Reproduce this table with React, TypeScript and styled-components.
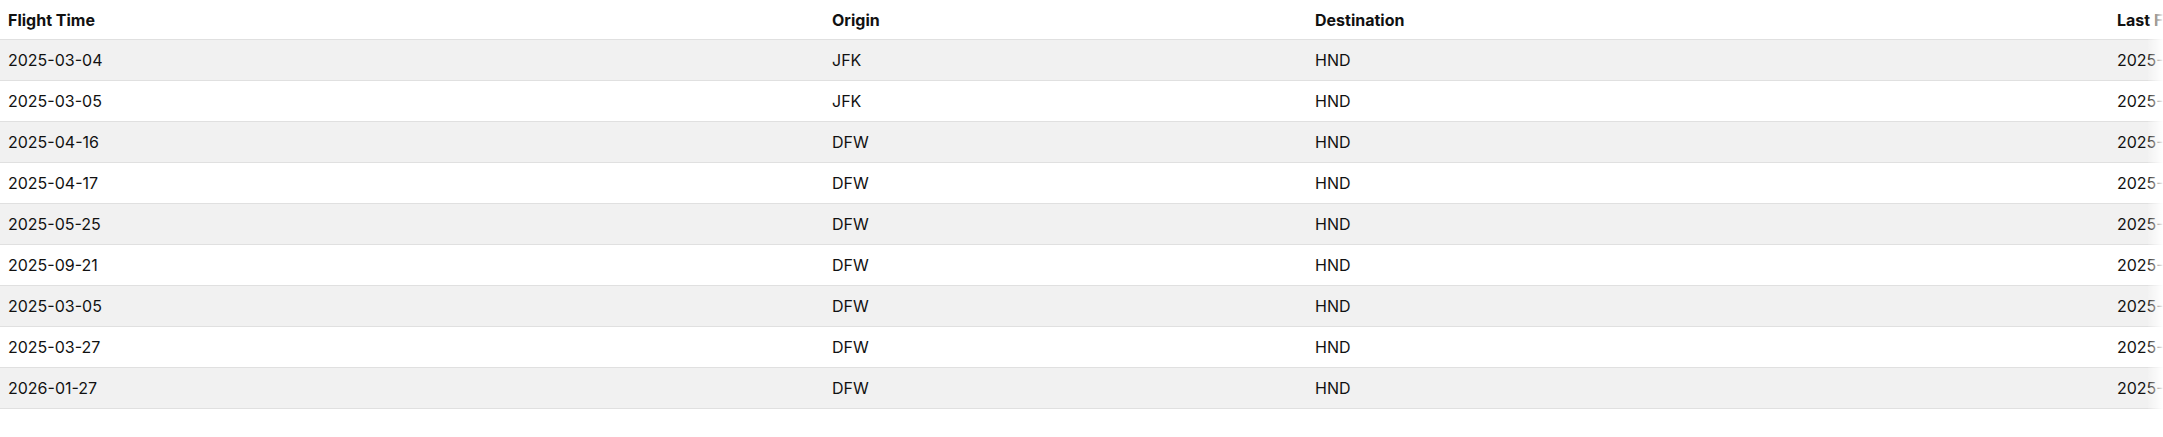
import React from 'react';
import { createGlobalStyle, styled } from 'styled-components';

const GlobalStyle = createGlobalStyle`
    html, body {
        margin: 0;
        padding: 0;
        background: #ffffff;
    }
    body {
        font-family: Inter, 'Liberation Sans', Arial, sans-serif;
        color: #111111;
    }
`;

const Wrapper = styled.div`
    position: relative;
    width: 100%;
    overflow: hidden;
`;

// soft edge where the table scrolls past the window
const Fade = styled.div`
    position: absolute;
    top: 0;
    right: 0;
    bottom: 0;
    width: 15px;
    pointer-events: none;
    background: linear-gradient(to right, rgba(255, 255, 255, 0.1), rgba(255, 255, 255, 0.97));
`;

const Table = styled.table`
    border-collapse: collapse;
    table-layout: fixed;
    width: 2400px;
`;

const Col = styled.col<{ $w: number }>`
    width: ${(p) => p.$w}px;
`;

const HeadCell = styled.th`
    height: 39px;
    padding: 0 8px;
    text-align: left;
    font-size: 16px;
    font-weight: 700;
    color: #111111;
    border-bottom: 1px solid #e0e0e0;
    white-space: nowrap;
`;

const Row = styled.tr<{ $striped: boolean }>`
    background: ${(p) => (p.$striped ? '#f1f1f1' : '#ffffff')};
    border-bottom: 1px solid #e0e0e0;
`;

const Cell = styled.td`
    height: 40px;
    padding: 0 8px;
    font-size: 16px;
    color: #111111;
    white-space: nowrap;
`;

interface IFlight {
    time: string;
    origin: string;
    destination: string;
    last: string;
}

const flights: IFlight[] = [
    { time: '2025-03-04', origin: 'JFK', destination: 'HND', last: '2025-03-01' },
    { time: '2025-03-05', origin: 'JFK', destination: 'HND', last: '2025-03-01' },
    { time: '2025-04-16', origin: 'DFW', destination: 'HND', last: '2025-03-01' },
    { time: '2025-04-17', origin: 'DFW', destination: 'HND', last: '2025-03-01' },
    { time: '2025-05-25', origin: 'DFW', destination: 'HND', last: '2025-03-01' },
    { time: '2025-09-21', origin: 'DFW', destination: 'HND', last: '2025-03-01' },
    { time: '2025-03-05', origin: 'DFW', destination: 'HND', last: '2025-03-01' },
    { time: '2025-03-27', origin: 'DFW', destination: 'HND', last: '2025-03-01' },
    { time: '2026-01-27', origin: 'DFW', destination: 'HND', last: '2025-03-01' },
];

export default function App() {
    return (
        <>
            <GlobalStyle />
            <Wrapper>
                <Table>
                    <colgroup>
                        <Col $w={824} />
                        <Col $w={483} />
                        <Col $w={802} />
                        <Col $w={291} />
                    </colgroup>
                    <thead>
                        <tr>
                            <HeadCell>Flight Time</HeadCell>
                            <HeadCell>Origin</HeadCell>
                            <HeadCell>Destination</HeadCell>
                            <HeadCell>Last Fetched</HeadCell>
                        </tr>
                    </thead>
                    <tbody>
                        {flights.map((f, i) => (
                            <Row key={i} $striped={i % 2 === 0}>
                                <Cell>{f.time}</Cell>
                                <Cell>{f.origin}</Cell>
                                <Cell>{f.destination}</Cell>
                                <Cell>{f.last}</Cell>
                            </Row>
                        ))}
                    </tbody>
                </Table>
                <Fade />
            </Wrapper>
        </>
    );
}
